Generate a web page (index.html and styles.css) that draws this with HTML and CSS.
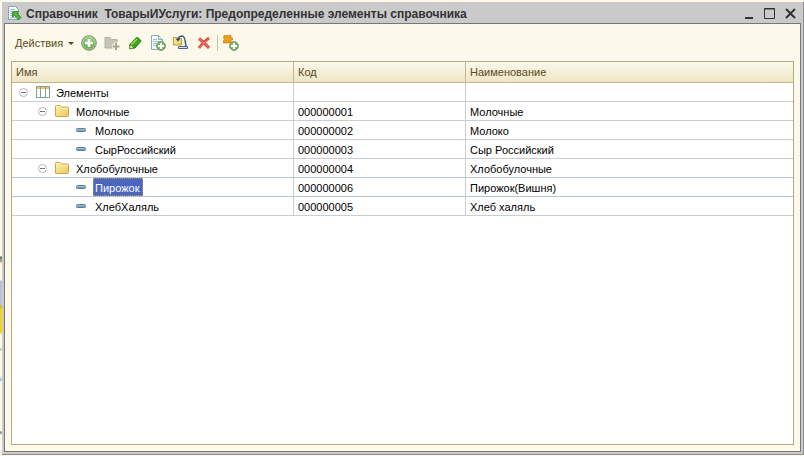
FILE: index.html
```
<!DOCTYPE html>
<html lang="ru">
<head>
<meta charset="utf-8">
<title>Справочник ТоварыИУслуги: Предопределенные элементы справочника</title>
<link rel="stylesheet" href="styles.css">
</head>
<body>
<svg width="0" height="0" class="defs" aria-hidden="true">
  <defs>
    <linearGradient id="green" x1="0" y1="0" x2="0" y2="1"><stop offset="0" stop-color="#a5d08c"/><stop offset="1" stop-color="#5da348"/></linearGradient>
    <linearGradient id="gold" x1="0" y1="0" x2="1" y2="1"><stop offset="0" stop-color="#fff0a8"/><stop offset="1" stop-color="#ecc75c"/></linearGradient>
    <linearGradient id="bar" x1="0" y1="0" x2="0" y2="1"><stop offset="0" stop-color="#b4d2e4"/><stop offset="1" stop-color="#5f89a5"/></linearGradient>
    <symbol id="minus" viewBox="0 0 9 9"><circle cx="4.5" cy="4.5" r="4" fill="#fff" stroke="#b4b4b4"/><path d="M2 4.5h5" stroke="#777"/></symbol>
    <symbol id="folder" viewBox="0 0 14 12"><path d="M.5 11V1.500q0-1 1-1H5l1.500 1.500h6q1 0 1 1v7.500q0 1-1 1h-11q-1 0-1-.5z" fill="url(#gold)" stroke="#cfa54c"/><path d="M1.500 3.500V1.500h3l1.500 2h6.500" fill="none" stroke="#fff6c8"/></symbol>
    <symbol id="item" viewBox="0 0 10 4"><rect x=".5" y=".5" width="9" height="3" rx="1" fill="url(#bar)" stroke="#5c7f98"/></symbol>
    <symbol id="badge" viewBox="0 0 10 10"><circle cx="5" cy="5" r="4.400" fill="#7db868" stroke="#74926a"/><path d="M5 2v6M2 5h6" stroke="#fff" stroke-width="2"/></symbol>
  </defs>
</svg>
<main class="window">
  <header class="titlebar">
    <svg class="app-icon" viewBox="0 0 14 15" aria-hidden="true"><path d="M.5.5h7l3 3v10H.5z" fill="#f7fbfd" stroke="#8ba4b4"/><path d="M2 3.500h5M2 5.500h2M2 7.500h2M2 9.500h3M2 11.500h6" stroke="#a3bfd2"/><path d="M4.500 5.500h6L9 7l4 4.500-2.500 2.500-4-4.500-2 1.500z" fill="#53b63a" stroke="#287b20" stroke-width=".8"/></svg>
    <h1>Справочник&nbsp; ТоварыИУслуги: Предопределенные элементы справочника</h1>
    <div class="controls">
      <button aria-label="Свернуть"><svg width="11" height="11"><path d="M2 10h8" stroke="#333" stroke-width="2"/></svg></button>
      <button aria-label="Развернуть"><svg width="11" height="11"><path d="M.5.500h10v10H.5zM0 1h11" fill="none" stroke="#333"/></svg></button>
      <button aria-label="Закрыть"><svg width="11" height="11"><path d="M1 1l9 9M10 1l-9 9" stroke="#333" stroke-width="2"/></svg></button>
    </div>
  </header>
  <section class="content">
    <nav class="toolbar" aria-label="Команды">
      <button class="actions">Действия <svg width="6" height="3"><path d="M0 0h6L3 3z" fill="#594a20"/></svg></button>
      <button aria-label="Добавить"><svg viewBox="0 0 16 16"><circle cx="8" cy="8" r="7.300" fill="url(#green)" stroke="#78906e"/><circle cx="8" cy="8" r="6.200" fill="none" stroke="#b5d8a2" stroke-width=".8"/><path d="M8 4v8M4 8h8" stroke="#fff" stroke-width="2.600"/></svg></button>
      <button aria-label="Добавить группу" disabled><svg viewBox="0 0 16 16"><path d="M1 13V2.500h5l1 2h6V13z" fill="#c6c4b4" stroke="#b3b1a2"/><path d="M12 7.500v8M8 11.500h8" stroke="#fbf9e9" stroke-width="4"/><path d="M12 8v7M8.500 11.500h7" stroke="#a1a58f" stroke-width="2"/></svg></button>
      <button aria-label="Изменить"><svg viewBox="0 0 16 16"><path d="M3 9.500L9 3q1-.8 2 0l2.500 2q.8 1 0 1.800L8 13l-5 .5z" fill="#3ba51e" stroke="#297b18"/><path d="M4.500 9.500l5.500-5.500" stroke="#9be06d" stroke-width="1.500"/><path d="M2.500 14l.5-4q3 0 3.500 3z" fill="#f1e1a8" stroke="#267219" stroke-width=".7"/></svg></button>
      <button aria-label="Скопировать"><svg viewBox="0 0 16 16"><path d="M1.500.5h7l4 4v10h-11z" fill="#f4fafc" stroke="#8fabb9"/><path d="M8.500.5v4h4" fill="#d3e4ec" stroke="#8fabb9"/><path d="M3 4.500h4M3 6.500h7M3 8.500h5M3 10.500h3" stroke="#a3bfd0"/><use href="#badge" x="6" y="6" width="10" height="10"/></svg></button>
      <button aria-label="Переместить"><svg viewBox="0 0 16 16"><path d="M.5 10V2.500h3l1 1h4V10z" fill="url(#gold)" stroke="#c49c46"/><path d="M5 4q1-3 4.500-3 2.500 0 3.500 11" fill="none" stroke="#36566c" stroke-width="1.500"/><path d="M2.500 3.500h5L5 6.500z" fill="#234c69"/><path d="M5.500 11.500h9v2h-9z" fill="#d8e7ee" stroke="#47687c"/></svg></button>
      <button aria-label="Удалить"><svg viewBox="0 0 16 16"><path d="M3 3.500q5 4 10 9.500M13 3q-6 4-10 10" fill="none" stroke="#d9483e" stroke-width="3"/><path d="M3.500 4l9 8.500M12.500 4l-9 8.500" stroke="#f18a7d"/></svg></button>
      <span class="separator"></span>
      <button aria-label="Предопределенный элемент"><svg viewBox="0 0 16 16"><path d="M1 .5h2.500v1h1v-1H8v2.500h1.500v2H8V8H5.500V6.500h-1V8H.5V5.500h1v-2H.5z" fill="#f0a315" stroke="#c07b11" stroke-width=".7"/><use href="#badge" x="6" y="6" width="10" height="10"/></svg></button>
    </nav>
    <div class="grid">
      <table>
        <colgroup><col class="col-name"><col class="col-code"><col></colgroup>
        <thead><tr><th>Имя</th><th>Код</th><th>Наименование</th></tr></thead>
        <tbody>
          <tr><td><div class="node"><svg class="toggle"><use href="#minus"/></svg><svg class="table-icon" viewBox="0 0 14 12"><path d="M.5.5h13v11H.5z" fill="#fff" stroke="#7f9fb0"/><path d="M1 1h12v2H1z" fill="#f1c843"/><path d="M4.500 1v10M9.500 1v10" stroke="#7f9fb0"/></svg><span>Элементы</span></div></td><td></td><td></td></tr>
          <tr><td><div class="node level1"><svg class="toggle"><use href="#minus"/></svg><svg class="folder"><use href="#folder"/></svg><span>Молочные</span></div></td><td>000000001</td><td>Молочные</td></tr>
          <tr><td><div class="node level2"><svg class="item"><use href="#item"/></svg><span>Молоко</span></div></td><td>000000002</td><td>Молоко</td></tr>
          <tr><td><div class="node level2"><svg class="item"><use href="#item"/></svg><span>СырРоссийский</span></div></td><td>000000003</td><td>Сыр Российский</td></tr>
          <tr class="before"><td><div class="node level1"><svg class="toggle"><use href="#minus"/></svg><svg class="folder"><use href="#folder"/></svg><span>Хлобобулочные</span></div></td><td>000000004</td><td>Хлобобулочные</td></tr>
          <tr class="current"><td><div class="node level2"><svg class="item"><use href="#item"/></svg><span class="selected">Пирожок</span></div></td><td>000000006</td><td>Пирожок(Вишня)</td></tr>
          <tr><td><div class="node level2"><svg class="item"><use href="#item"/></svg><span>ХлебХаляль</span></div></td><td>000000005</td><td>Хлеб халяль</td></tr>
        </tbody>
      </table>
    </div>
  </section>
</main>
</body>
</html>
```
FILE: styles.css
```
* { box-sizing: border-box; }
body {
  margin: 0;
  height: 100vh;
  padding: 2px 0 1px 2px;
  display: flex;
  font: 11px/14px "Liberation Sans", Arial, sans-serif;
  color: #000;
  background: linear-gradient(#fcf9ea 256px, #4d7190 257px, #d9b15c 262px, #fcf9ea 263px 280px, #b9c4d8 281px 304px, #d8b52c 307px, #f5d410 309px 333px, #fcf9ea 334px 348px, #8ccb9d 349px, #fcf9ea 351px 376px, #9cc9dc 380px, #fcf9ea 382px 431px, #61818f 432px, #fcf9ea 435px) #fcf9ea;
}
.defs { position: absolute; }
svg { display: block; flex: none; }
button {
  padding: 0;
  border: 0;
  background: none;
  font: inherit;
  color: inherit;
}
.window {
  flex: 1;
  min-width: 0;
  display: flex;
  flex-direction: column;
  padding: 0 2px 2px;
  background: #cacaca;
  border: solid #8c8c8c;
  border-width: 0 1px 1px 0;
}
.titlebar {
  height: 21px;
  flex: none;
  display: flex;
  align-items: center;
  gap: 4px;
  padding: 2px 5px 0 4px;
}
.app-icon { width: 14px; height: 15px; }
h1 {
  flex: 1;
  margin: 0;
  font-size: 12px;
  line-height: 16px;
  color: #333;
  white-space: nowrap;
}
.controls { display: flex; gap: 10px; }
.content {
  flex: 1;
  min-height: 0;
  display: flex;
  flex-direction: column;
  padding: 8px 6px 6px;
  background: #fcf9ea;
  border: 1px solid #777;
}
.toolbar {
  height: 22px;
  margin-bottom: 7px;
  flex: none;
  display: flex;
  align-items: center;
  gap: 7px;
  padding-left: 4px;
  color: #594a20;
}
.toolbar button > svg { width: 16px; height: 16px; }
.toolbar .actions { display: flex; align-items: center; gap: 5px; }
.toolbar .actions svg { width: 6px; height: 3px; }
.separator { width: 1px; height: 16px; margin: 0 -2px; background: #c9c2a4; }
.grid {
  flex: 1;
  min-height: 0;
  background: #fff;
  border: 1px solid #b3aa82;
}
table {
  width: 100%;
  table-layout: fixed;
  border-spacing: 0;
}
.col-name { width: 282px; }
.col-code { width: 172px; }
th, td {
  padding: 0 4px;
  text-align: left;
  font-weight: normal;
  white-space: nowrap;
  border: solid #c8ced1;
  border-width: 0 1px 1px 0;
}
th:last-child, td:last-child { border-right: 0; }
th {
  height: 21px;
  color: #594a20;
  background: linear-gradient(#faf8ed, #efe6c4);
  border-color: #c0b88f;
}
td { height: 19px; line-height: 16px; padding-top: 2px; }
td:first-child { padding-top: 0; }
.before td, .current td { border-bottom-color: #b4c5e0; }
.node { display: flex; align-items: center; height: 18px; padding-left: 3px; }
.level1 { padding-left: 22px; }
.level2 { padding-left: 60px; }
.node span { height: 18px; padding: 2px; line-height: 16px; }
.toggle { width: 9px; height: 9px; margin-right: 8px; }
.table-icon, .folder { width: 14px; height: 12px; margin-right: 5px; }
.table-icon { margin-right: 4px; }
.item { width: 10px; height: 4px; margin-right: 7px; }
.node .selected { padding-right: 4px; color: #fff; background: #4a66c0; outline: 1px dotted #b69a46; outline-offset: -1px; }
```
